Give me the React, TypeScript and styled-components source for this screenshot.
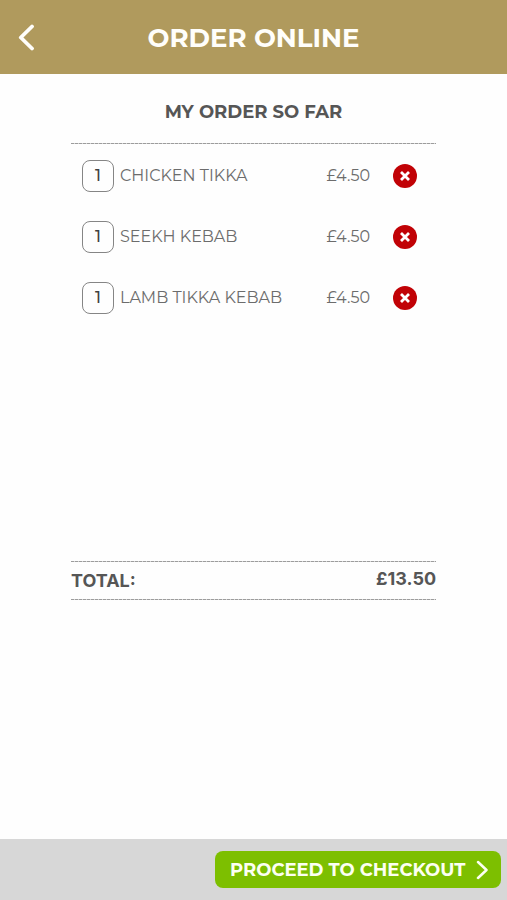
import React from "react";
import styled, { createGlobalStyle } from "styled-components";

const GlobalStyle = createGlobalStyle`
  *, *::before, *::after { box-sizing: border-box; }
  body {
    margin: 0;
    background: #fefefe;
    color: #565656;
    font-family: Montserrat, Inter, "Liberation Sans", sans-serif;
  }
  button { font: inherit; cursor: pointer; }
`;

const Screen = styled.div`
  display: flex;
  flex-direction: column;
  min-height: 100vh;
`;

const Header = styled.header`
  display: grid;
  grid-template-columns: 52px 1fr 52px;
  align-items: center;
  height: 74px;
  background: #b09a5d;
  color: #fffefa;
`;

const BackButton = styled.button`
  display: flex;
  justify-content: center;
  padding: 8px 0;
  border: 0;
  background: none;
  color: inherit;
`;

const PageTitle = styled.h1`
  margin: 0;
  padding-top: 2px;
  font-size: 26px;
  line-height: 32px;
  font-weight: 700;
  text-align: center;
  white-space: nowrap;
`;

const Main = styled.main`
  flex: 1;
  padding: 0 14%;
`;

const OrderTitle = styled.h2`
  margin: 0;
  padding: 26px 0 19px;
  font-size: 18px;
  line-height: 24px;
  font-weight: 700;
  text-align: center;
`;

const Rule = styled.div`
  height: 1px;
  background: repeating-linear-gradient(to right, #9c9c9c 0 3px, #d4d4d4 3px 4px);
`;

const OrderList = styled.ul`
  min-height: 417px;
  margin: 0;
  padding: 1px 19px 0 11px;
  list-style: none;
`;

const OrderRow = styled.li`
  display: flex;
  align-items: center;
  height: 61px;
`;

const Quantity = styled.span`
  display: flex;
  align-items: center;
  justify-content: center;
  width: 32px;
  height: 32px;
  margin-right: 6px;
  border: 1px solid #858585;
  border-radius: 8px;
  color: #404040;
  font-size: 16px;
  font-weight: 500;
`;

const ItemText = styled.span<{ $grow?: boolean }>`
  flex: ${({ $grow }) => ($grow ? "1" : "none")};
  padding-top: 1px;
  color: #6c6c6c;
  font-size: 16px;
  line-height: 24px;
  font-weight: 400;
  white-space: nowrap;
`;

const RemoveButton = styled.button`
  display: flex;
  align-items: center;
  justify-content: center;
  width: 24px;
  height: 24px;
  margin-left: 23px;
  padding: 0;
  border: 0;
  border-radius: 50%;
  background: #c10206;
  color: #ffffff;
`;

const TotalRow = styled.div`
  display: flex;
  align-items: center;
  justify-content: space-between;
  height: 37px;
  font-family: Inter, "Liberation Sans", sans-serif;
  font-size: 18px;
  line-height: 24px;
  font-weight: 700;
`;

const TotalPrice = styled.span`
  padding-bottom: 4px;
`;

const Footer = styled.footer`
  display: flex;
  align-items: center;
  justify-content: flex-end;
  height: 61px;
  padding: 0 6px;
  background: #d7d7d7;
`;

const CheckoutButton = styled.button`
  display: flex;
  align-items: center;
  justify-content: space-between;
  width: 286px;
  height: 37px;
  padding: 0 13px 0 15px;
  border: 0;
  border-radius: 8px;
  background: #7dbf00;
  color: #fcfff2;
  font-size: 18px;
  font-weight: 700;
  white-space: nowrap;
`;

const items = [
  { name: "CHICKEN TIKKA", quantity: 1, price: "£4.50" },
  { name: "SEEKH KEBAB", quantity: 1, price: "£4.50" },
  { name: "LAMB TIKKA KEBAB", quantity: 1, price: "£4.50" },
];

export default function App() {
  return (
    <Screen>
      <GlobalStyle />
      <Header>
        <BackButton type="button" aria-label="Back">
          <svg width="16" height="28" viewBox="0 0 16 28" fill="none" stroke="currentColor" strokeWidth="3.8" strokeLinecap="round" strokeLinejoin="round">
            <path d="M14 3.5 2.8 14.5 14 25.5" />
          </svg>
        </BackButton>
        <PageTitle>ORDER ONLINE</PageTitle>
      </Header>
      <Main>
        <OrderTitle>MY ORDER SO FAR</OrderTitle>
        <Rule />
        <OrderList>
          {items.map((item) => (
            <OrderRow key={item.name}>
              <Quantity>{item.quantity}</Quantity>
              <ItemText $grow>{item.name}</ItemText>
              <ItemText>{item.price}</ItemText>
              <RemoveButton type="button" aria-label={`Remove ${item.name}`}>
                <svg width="10" height="10" viewBox="0 0 10 10" fill="none" stroke="currentColor" strokeWidth="2.8">
                  <path d="M1 1 9 9M9 1 1 9" />
                </svg>
              </RemoveButton>
            </OrderRow>
          ))}
        </OrderList>
        <Rule />
        <TotalRow>
          <span>TOTAL:</span>
          <TotalPrice>£13.50</TotalPrice>
        </TotalRow>
        <Rule />
      </Main>
      <Footer>
        <CheckoutButton type="button">
          PROCEED TO CHECKOUT
          <svg width="12" height="20" viewBox="0 0 12 20" fill="none" stroke="currentColor" strokeWidth="2.5" strokeLinecap="round" strokeLinejoin="round">
            <path d="M2 2 10.5 10 2 18" />
          </svg>
        </CheckoutButton>
      </Footer>
    </Screen>
  );
}
